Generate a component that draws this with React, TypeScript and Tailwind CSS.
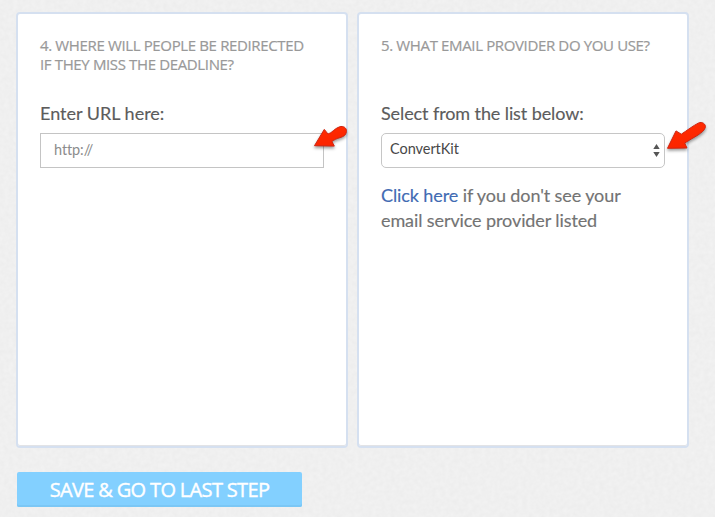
import type { ReactNode } from 'react';

function Paper() {
  return (
    <svg className="absolute inset-0 h-full w-full" aria-hidden="true">
      <filter id="paper" x="0" y="0" width="100%" height="100%" colorInterpolationFilters="sRGB">
        <feTurbulence type="fractalNoise" baseFrequency="0.22" numOctaves={2} seed={4} />
        <feColorMatrix values="0.03 0 0 0 0.924  0.03 0 0 0 0.924  0.03 0 0 0 0.924  0 0 0 0 1" />
      </filter>
      <rect width="100%" height="100%" filter="url(#paper)" />
    </svg>
  );
}

function Arrow({ id, d, className }: { id: string; d: string; className: string }) {
  return (
    <svg className={`absolute overflow-visible ${className}`} viewBox="0 0 42 32" width="42" height="32" aria-hidden="true">
      <defs>
        <linearGradient id={id} x1="0" y1="0" x2="0.35" y2="1">
          <stop offset="0" stopColor="#f8401c" />
          <stop offset="0.3" stopColor="#ff2a00" />
          <stop offset="1" stopColor="#fb2400" />
        </linearGradient>
      </defs>
      <path d={d} fill={`url(#${id})`} stroke="#cf2410" strokeWidth="1" strokeLinejoin="round" className="drop-shadow-[0_2px_1.5px_rgba(0,0,0,0.38)]" />
    </svg>
  );
}

function Card({ title, children }: { title: ReactNode; children: ReactNode }) {
  return (
    <section className="h-[436px] w-[332px] rounded-[4px] border-2 border-[#d5e0f0] bg-white px-[22px] pt-[22px] shadow-[inset_0_-1px_0_#e2e3e6]">
      <h2 className="h-[62px] whitespace-nowrap font-['Open_Sans',sans-serif] text-[15px] leading-[19px] tracking-[-0.36px] text-[#999] [-webkit-text-stroke:0.2px]">{title}</h2>
      {children}
    </section>
  );
}

export default function App() {
  return (
    <main className="relative h-[517px] w-[715px] overflow-hidden bg-[#efefef] font-[Lato,sans-serif] text-[#666]">
      <Paper />
      <div className="relative flex flex-col items-start pl-4 pt-3">
        <div className="flex gap-[9px]">
          <Card title={<>4. WHERE WILL PEOPLE BE REDIRECTED<br />IF THEY MISS THE DEADLINE?</>}>
            <label className="block">
              <span className="block h-[35px] pt-[3px] text-[18px] leading-6 text-[#5c5c5c] [-webkit-text-stroke:0.15px]">Enter URL here:</span>
              <input placeholder="http://" className="block h-[35px] w-[284px] border border-[#c4c4c4] bg-white px-[13px] pb-[3px] text-[14.5px] tracking-[-0.1px] text-[#666] placeholder:text-[#8c8c8c]" />
            </label>
          </Card>
          <Card title="5. WHAT EMAIL PROVIDER DO YOU USE?">
            <div className="h-[35px] pt-[3px] text-[18px] leading-6 tracking-[-0.1px] text-[#5c5c5c] [-webkit-text-stroke:0.15px]">Select from the list below:</div>
            <button className="flex h-[35px] w-[284px] items-center justify-between rounded-[5px] border border-[#c6c6c6] bg-white pl-2 pr-1 text-[14.5px] text-[#484848]">
              <span className="-mt-[3px] tracking-[-0.05px]">ConvertKit</span>
              <svg width="7" height="13" viewBox="0 0 7 13" fill="#555"><path d="M3.5 0 6.7 5H.3ZM.3 8h6.4l-3.2 5Z" /></svg>
            </button>
            <p className="mt-[15px] whitespace-nowrap text-[18px] leading-[25px] tracking-[-0.1px] text-[#737373] [-webkit-text-stroke:0.15px]">
              <a className="text-[#426bb3]">Click here</a> if you don't see your<br />email service provider listed
            </p>
          </Card>
        </div>
        <button className="ml-px mt-6 h-[35px] w-[285px] rounded-[2px] bg-[#83d0ff] pt-px font-['Open_Sans',sans-serif] text-[20px] leading-[30px] tracking-[-0.66px] text-white shadow-[inset_0_-2px_0_#7bc7f5] [-webkit-text-stroke:0.4px]">SAVE &amp; GO TO LAST STEP</button>
      </div>
      <Arrow id="arrow-url" className="left-[310px] top-[122px]" d="M4.5 23.7 14.3 7.4 18 12C22 11 24.5 6.5 29.5 4.8C33.5 3.5 36.8 6 36.5 9.5C36 13.5 33 14.7 30 15.6C27 16.5 24.5 17.5 21.9 19.5L24.3 24.1Z" />
      <Arrow id="arrow-provider" className="left-[664px] top-[120px]" d="M3.5 28.3 12 10.9 17.3 14.2C23 10.5 29 5.8 34.5 3C38 1.2 42.5 4.2 41.2 7.8C40 11 37 12.8 34 15C29.5 18 25 20 20.7 23L23 28Z" />
    </main>
  );
}
